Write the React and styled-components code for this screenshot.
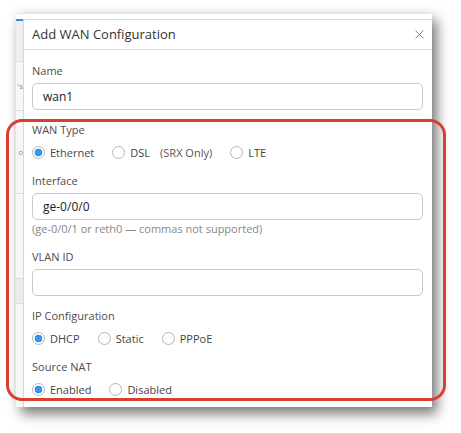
import React from 'react';
import styled, { createGlobalStyle } from 'styled-components';

const GlobalStyle = createGlobalStyle`
  body {
    margin: 0;
    background: #fff;
    font-family: "Open Sans", "Noto Sans", sans-serif;
  }
`;

function Radio({ checked, label, note }) {
  return (
    <Option>
      <Circle checked={checked} />
      <span>{label}</span>
      {note && <Note>{note}</Note>}
    </Option>
  );
}

function App() {
  return (
    <Stage>
      <GlobalStyle />
      <Frame>
        <TopStrip />
        <FrameRow>
          <Backdrop>
            <BackdropRow tall={40} shade="#eeeeee" />
            <BackdropRow tall={48}><Glyph>'s</Glyph></BackdropRow>
            <BackdropRow tall={82} shade="#f6f6f6"><Glyph>o</Glyph></BackdropRow>
            <BackdropRow tall={84} />
            <BackdropRow tall={24} shade="#ececec" />
            <BackdropRow tall={110} />
          </Backdrop>
          <Modal>
            <Header>
              <Title>Add WAN Configuration</Title>
              <Close>
                <svg width="9" height="9" viewBox="0 0 9 9">
                  <path d="M0.5 0.5 L8.5 8.5 M8.5 0.5 L0.5 8.5" stroke="#8a8a8a" strokeWidth="1" />
                </svg>
              </Close>
            </Header>
            <Body>
              <Field>
                <Label>Name</Label>
                <Input defaultValue="wan1" />
              </Field>
              <Field>
                <Label>WAN Type</Label>
                <RadioRow>
                  <Radio checked label="Ethernet" />
                  <Radio label="DSL" note="(SRX Only)" />
                  <Radio label="LTE" />
                </RadioRow>
              </Field>
              <Field>
                <Label>Interface</Label>
                <Input defaultValue="ge-0/0/0" />
                <Help>(ge-0/0/1 or reth0 — commas not supported)</Help>
              </Field>
              <Field>
                <Label>VLAN ID</Label>
                <Input defaultValue="" />
              </Field>
              <Field>
                <Label>IP Configuration</Label>
                <RadioRow>
                  <Radio checked label="DHCP" />
                  <Radio label="Static" />
                  <Radio label="PPPoE" />
                </RadioRow>
              </Field>
              <Field>
                <Label>Source NAT</Label>
                <RadioRow>
                  <Radio checked label="Enabled" />
                  <Radio label="Disabled" />
                </RadioRow>
              </Field>
            </Body>
          </Modal>
        </FrameRow>
      </Frame>
      <Highlight />
    </Stage>
  );
}

const Stage = styled.div`
  position: relative;
  width: 461px;
  height: 433px;
  overflow: hidden;
  box-sizing: border-box;
  padding: 13px 0 0 16px;
`;

const Frame = styled.div`
  width: 416px;
  height: 394px;
  background: #fff;
  border-top: 1px solid #e6e6e6;
  box-sizing: border-box;
  display: flex;
  flex-direction: column;
  overflow: hidden;
  box-shadow: 5px 7px 12px rgba(0, 0, 0, 0.52), 0 -2px 10px rgba(0, 0, 0, 0.06);
`;

const TopStrip = styled.div`
  height: 5px;
  flex: none;
`;

const FrameRow = styled.div`
  flex: 1;
  display: flex;
  min-height: 0;
`;

const Backdrop = styled.div`
  width: 7px;
  flex: none;
  display: flex;
  flex-direction: column;
  border-top: 2px solid #2d8fe0;
  background: #f7f7f7;
  overflow: hidden;
`;

const BackdropRow = styled.div`
  height: ${(p) => p.tall}px;
  flex: none;
  background: ${(p) => p.shade || 'transparent'};
  border-bottom: 1px solid #dcdcdc;
  display: flex;
  align-items: center;
  justify-content: flex-end;
`;

const Glyph = styled.span`
  font-size: 8px;
  line-height: 10px;
  color: #888;
`;

const Modal = styled.div`
  flex: 1;
  display: flex;
  flex-direction: column;
  background: #fff;
  border-left: 1px solid #d8d8d8;
  border-top: 1px solid #dcdcdc;
`;

const Header = styled.div`
  height: 28px;
  flex: none;
  display: flex;
  align-items: center;
  justify-content: space-between;
  padding: 0 8px 1px 8px;
  border-bottom: 1px solid #dedede;
`;

const Title = styled.div`
  font-size: 13px;
  color: #333;
`;

const Close = styled.div`
  display: flex;
  align-items: center;
`;

const Body = styled.div`
  display: flex;
  flex-direction: column;
  gap: 11px;
  padding: 12px 9px 0 8px;
`;

const Field = styled.div`
  display: flex;
  flex-direction: column;
`;

const Label = styled.div`
  font-size: 11px;
  line-height: 18px;
  color: #4d4d4d;
  margin-bottom: 3px;
`;

const Input = styled.input`
  height: 27px;
  box-sizing: border-box;
  border: 1px solid #c9c9c9;
  border-radius: 5px;
  padding: 0 10px;
  font-family: inherit;
  font-size: 12px;
  color: #222;
  outline: none;
`;

const Help = styled.div`
  font-size: 11px;
  line-height: 16px;
  color: #888;
  margin-top: 1px;
`;

const RadioRow = styled.div`
  display: flex;
  align-items: center;
  gap: 18px;
  height: 18px;
  margin-top: 1px;
`;

const Option = styled.label`
  display: flex;
  align-items: center;
  gap: 5px;
  font-size: 11px;
  color: #444;
`;

const Circle = styled.span`
  width: 11px;
  height: 11px;
  border-radius: 50%;
  border: 1px solid #b5b5b5;
  background: ${(p) => (p.checked ? 'radial-gradient(circle, #3a96e6 0 3.6px, #fff 4.2px)' : '#fff')};
  flex: none;
`;

const Note = styled.span`
  margin-left: 5px;
  color: #555;
`;

const Highlight = styled.div`
  position: absolute;
  left: 6px;
  top: 119px;
  width: 440px;
  height: 282px;
  box-sizing: border-box;
  border: 3px solid #d8402d;
  border-radius: 16px;
  pointer-events: none;
`;

export default App;
